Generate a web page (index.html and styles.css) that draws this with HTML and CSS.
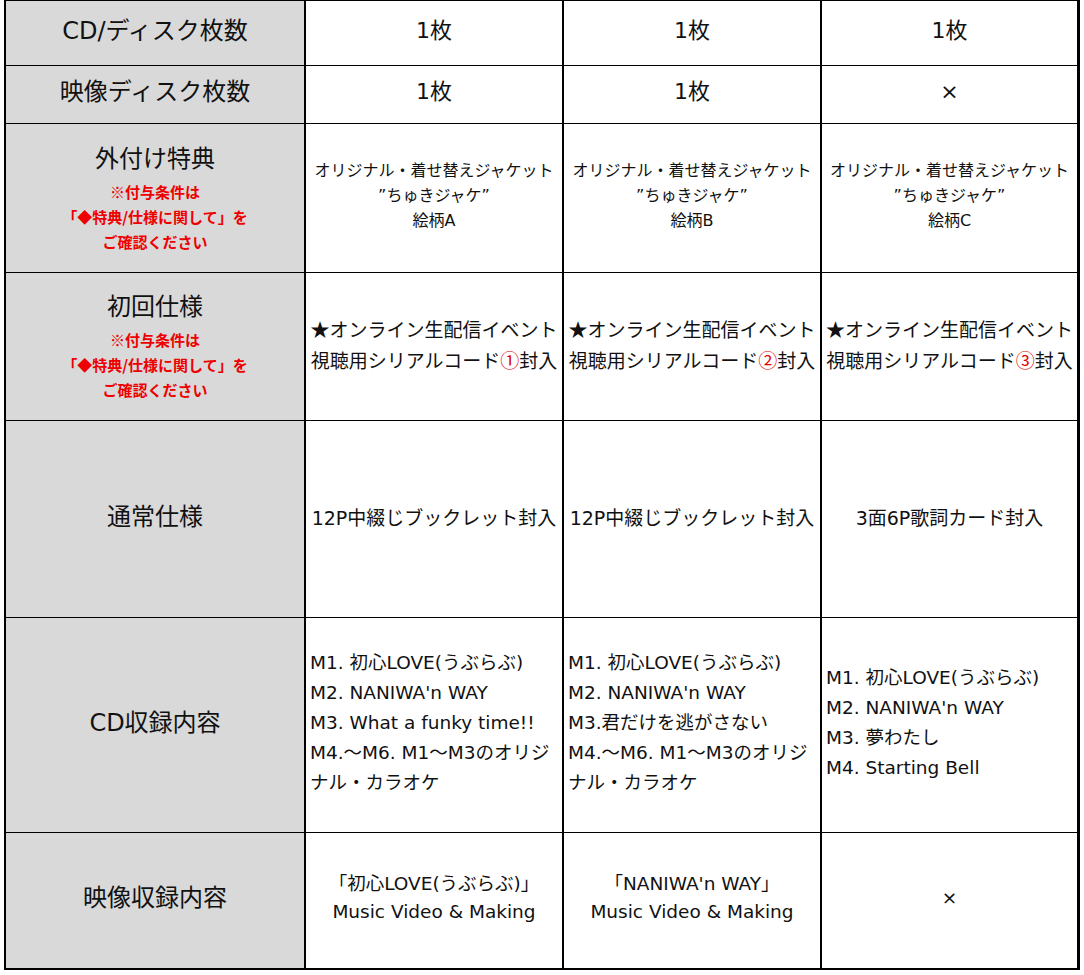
FILE: index.html
```html
<!DOCTYPE html>
<html lang="ja">
<head>
<meta charset="utf-8">
<title>仕様比較</title>
<link rel="stylesheet" href="styles.css">
</head>
<body>
<div class="sheet">
  <div class="grid">
    <div class="cell head"><span class="label">CD/ディスク枚数</span></div>
    <div class="cell big">1枚</div>
    <div class="cell big">1枚</div>
    <div class="cell big">1枚</div>

    <div class="cell head"><span class="label">映像ディスク枚数</span></div>
    <div class="cell big">1枚</div>
    <div class="cell big">1枚</div>
    <div class="cell big">×</div>

    <div class="cell head">
      <span class="label with-note">外付け特典</span>
      <span class="note">※付与条件は</span>
      <span class="note">「◆特典/仕様に関して」を</span>
      <span class="note">ご確認ください</span>
    </div>
    <div class="cell small">
      <span class="line">オリジナル・着せ替えジャケット</span>
      <span class="line">”ちゅきジャケ”</span>
      <span class="line">絵柄A</span>
    </div>
    <div class="cell small">
      <span class="line">オリジナル・着せ替えジャケット</span>
      <span class="line">”ちゅきジャケ”</span>
      <span class="line">絵柄B</span>
    </div>
    <div class="cell small">
      <span class="line">オリジナル・着せ替えジャケット</span>
      <span class="line">”ちゅきジャケ”</span>
      <span class="line">絵柄C</span>
    </div>

    <div class="cell head">
      <span class="label with-note">初回仕様</span>
      <span class="note">※付与条件は</span>
      <span class="note">「◆特典/仕様に関して」を</span>
      <span class="note">ご確認ください</span>
    </div>
    <div class="cell mid">
      <span class="line"><span class="cjk">★</span>オンライン生配信イベント</span>
      <span class="line">視聴用シリアルコード<span class="cjk red">①</span>封入</span>
    </div>
    <div class="cell mid">
      <span class="line"><span class="cjk">★</span>オンライン生配信イベント</span>
      <span class="line">視聴用シリアルコード<span class="cjk red">②</span>封入</span>
    </div>
    <div class="cell mid">
      <span class="line"><span class="cjk">★</span>オンライン生配信イベント</span>
      <span class="line">視聴用シリアルコード<span class="cjk red">③</span>封入</span>
    </div>

    <div class="cell head"><span class="label">通常仕様</span></div>
    <div class="cell mid"><span class="line">12P中綴じブックレット封入</span></div>
    <div class="cell mid"><span class="line">12P中綴じブックレット封入</span></div>
    <div class="cell mid"><span class="line">3面6P歌詞カード封入</span></div>

    <div class="cell head"><span class="label">CD収録内容</span></div>
    <div class="cell list">
      <span class="line">M1. 初心LOVE(うぶらぶ)</span>
      <span class="line">M2. NANIWA'n WAY</span>
      <span class="line">M3. What a funky time!!</span>
      <span class="line">M4.～M6. M1～M3のオリジ</span>
      <span class="line">ナル・カラオケ</span>
    </div>
    <div class="cell list">
      <span class="line">M1. 初心LOVE(うぶらぶ)</span>
      <span class="line">M2. NANIWA'n WAY</span>
      <span class="line">M3.君だけを逃がさない</span>
      <span class="line">M4.～M6. M1～M3のオリジ</span>
      <span class="line">ナル・カラオケ</span>
    </div>
    <div class="cell list">
      <span class="line">M1. 初心LOVE(うぶらぶ)</span>
      <span class="line">M2. NANIWA'n WAY</span>
      <span class="line">M3. 夢わたし</span>
      <span class="line">M4. Starting Bell</span>
    </div>

    <div class="cell head"><span class="label">映像収録内容</span></div>
    <div class="cell video">
      <span class="line">「初心LOVE(うぶらぶ)」</span>
      <span class="line">Music Video &amp; Making</span>
    </div>
    <div class="cell video">
      <span class="line">「NANIWA'n WAY」</span>
      <span class="line">Music Video &amp; Making</span>
    </div>
    <div class="cell video"><span class="line">×</span></div>
  </div>
</div>
</body>
</html>
```

FILE: styles.css
```css
html, body {
  margin: 0;
  padding: 0;
  background: #ffffff;
}

body {
  font-family: "DejaVu Sans", "Noto Sans CJK JP", sans-serif;
  color: #111111;
}

.sheet {
  padding-left: 4px;
  width: 1076px;
}

.grid {
  display: grid;
  grid-template-columns: 298px 256px 256px 255px;
  grid-template-rows: 64px 57px 148px 147px 196px 214px 135px;
  column-gap: 2px;
  row-gap: 1px;
  background: #000000;
  padding: 1px 3px 2px 2px;
  width: 1071px;
}

.cell {
  background: #ffffff;
  display: flex;
  flex-direction: column;
  align-items: center;
  justify-content: center;
  text-align: center;
  overflow: hidden;
}

.head {
  background: #d9d9d9;
}

.label {
  font-size: 24px;
  line-height: 32px;
  padding-bottom: 5px;
}

.label.with-note {
  padding-bottom: 0;
  margin-bottom: 4px;
}

.note {
  color: #ee0000;
  font-family: "Noto Sans CJK JP", sans-serif;
  font-weight: 700;
  font-size: 15px;
  line-height: 25px;
}

.cjk {
  font-family: "Noto Sans CJK JP", sans-serif;
}

.big {
  font-size: 22px;
  line-height: 30px;
  padding-bottom: 5px;
}

.line {
  display: block;
  white-space: nowrap;
}

.small {
  font-size: 16px;
  line-height: 25px;
  padding-bottom: 5px;
}

.mid {
  font-size: 19px;
  line-height: 30px;
  padding-bottom: 3px;
}

.red {
  color: #e00000;
}

.list {
  align-items: flex-start;
  text-align: left;
  padding-left: 4px;
  font-size: 18.5px;
  line-height: 30px;
  padding-bottom: 4px;
}

.video {
  font-size: 18.5px;
  line-height: 28px;
  padding-bottom: 6px;
}
```
